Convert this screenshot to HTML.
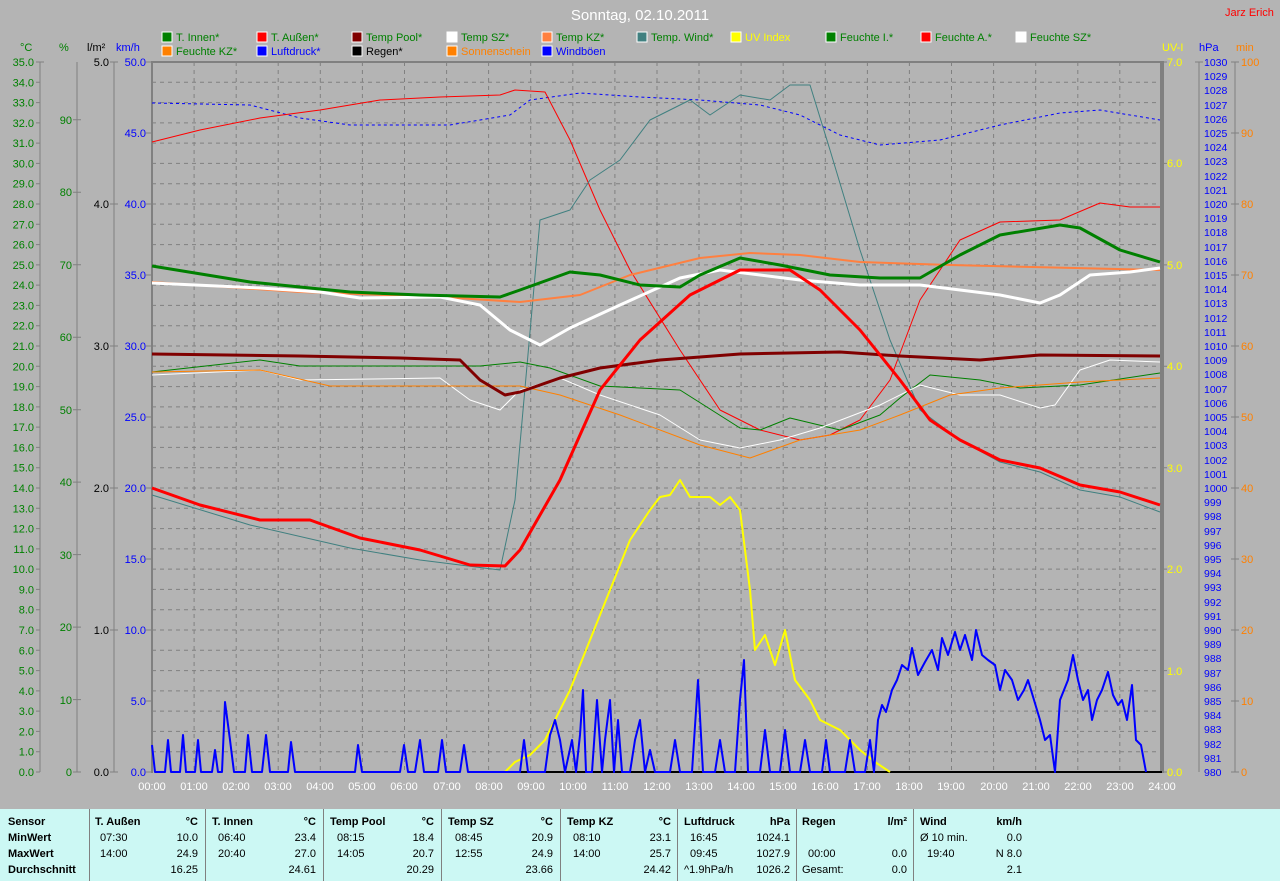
<!DOCTYPE html>
<html><head><meta charset="utf-8"><style>
html,body{margin:0;padding:0;background:#b4b4b4;width:1280px;height:881px;overflow:hidden;font-family:"Liberation Sans",sans-serif;}
svg{position:absolute;left:0;top:0;}
#tbl{position:absolute;left:0;top:809px;width:1280px;height:72px;background:#ccf8f4;font-size:11px;color:#000;}
#tbl div{position:absolute;white-space:nowrap;}
.b{font-weight:bold}
.sep{width:1px;height:72px;top:0;background:#808080}
.r{text-align:right}
</style></head><body>
<svg width="1280" height="809" font-family="Liberation Sans, sans-serif" font-size="11">
<text x="640" y="20" fill="#fff" font-size="15" text-anchor="middle">Sonntag, 02.10.2011</text>
<text x="1225" y="16" fill="#f00" font-size="11">Jarz Erich</text>
<!-- legend -->
<g font-size="11">
<rect x="162" y="32" width="10" height="10" fill="#008000" stroke="#fff"/><text x="176" y="41" fill="#008000">T. Innen*</text>
<rect x="257" y="32" width="10" height="10" fill="#f00" stroke="#fff"/><text x="271" y="41" fill="#008000">T. Außen*</text>
<rect x="352" y="32" width="10" height="10" fill="#800000" stroke="#fff"/><text x="366" y="41" fill="#008000">Temp Pool*</text>
<rect x="447" y="32" width="10" height="10" fill="#fff" stroke="#fff"/><text x="461" y="41" fill="#008000">Temp SZ*</text>
<rect x="542" y="32" width="10" height="10" fill="#ff8040" stroke="#fff"/><text x="556" y="41" fill="#008000">Temp KZ*</text>
<rect x="637" y="32" width="10" height="10" fill="#408080" stroke="#fff"/><text x="651" y="41" fill="#008000">Temp. Wind*</text>
<rect x="731" y="32" width="10" height="10" fill="#ffff00" stroke="#fff"/><text x="745" y="41" fill="#ffff00">UV Index</text>
<rect x="826" y="32" width="10" height="10" fill="#008000" stroke="#fff"/><text x="840" y="41" fill="#008000">Feuchte I.*</text>
<rect x="921" y="32" width="10" height="10" fill="#f00" stroke="#fff"/><text x="935" y="41" fill="#008000">Feuchte A.*</text>
<rect x="1016" y="32" width="10" height="10" fill="#fff" stroke="#fff"/><text x="1030" y="41" fill="#008000">Feuchte SZ*</text>
<rect x="162" y="46" width="10" height="10" fill="#ff8000" stroke="#fff"/><text x="176" y="55" fill="#008000">Feuchte KZ*</text>
<rect x="257" y="46" width="10" height="10" fill="#0000ff" stroke="#fff"/><text x="271" y="55" fill="#0000ff">Luftdruck*</text>
<rect x="352" y="46" width="10" height="10" fill="#000" stroke="#fff"/><text x="366" y="55" fill="#000">Regen*</text>
<rect x="447" y="46" width="10" height="10" fill="#ff8000" stroke="#fff"/><text x="461" y="55" fill="#ff8000">Sonnenschein</text>
<rect x="542" y="46" width="10" height="10" fill="#0000ff" stroke="#fff"/><text x="556" y="55" fill="#0000ff">Windböen</text>
</g>
<!-- axis titles -->
<text x="20" y="51" fill="#008000">°C</text>
<text x="59" y="51" fill="#008000">%</text>
<text x="87" y="51" fill="#000">l/m²</text>
<text x="116" y="51" fill="#0000ff">km/h</text>
<text x="1162" y="51" fill="#ffff00">UV-I</text>
<text x="1199" y="51" fill="#0000ff">hPa</text>
<text x="1236" y="51" fill="#ff8000">min</text>
<!-- grid -->
<g stroke="#808080" stroke-dasharray="4,4" stroke-width="1">
<path d="M152 82.3H1162M152 102.6H1162M152 122.9H1162M152 143.1H1162M152 163.4H1162M152 183.7H1162M152 204H1162M152 224.3H1162M152 244.6H1162M152 264.9H1162M152 285.1H1162M152 305.4H1162M152 325.7H1162M152 346H1162M152 366.3H1162M152 386.6H1162M152 406.9H1162M152 427.1H1162M152 447.4H1162M152 467.7H1162M152 488H1162M152 508.3H1162M152 528.6H1162M152 548.9H1162M152 569.1H1162M152 589.4H1162M152 609.7H1162M152 630H1162M152 650.3H1162M152 670.6H1162M152 690.9H1162M152 711.1H1162M152 731.4H1162M152 751.7H1162"/>
<path d="M194.1 62V772M236.2 62V772M278.2 62V772M320.3 62V772M362.4 62V772M404.5 62V772M446.6 62V772M488.6 62V772M530.7 62V772M572.8 62V772M614.9 62V772M657 62V772M699 62V772M741.1 62V772M783.2 62V772M825.3 62V772M867.4 62V772M909.4 62V772M951.5 62V772M993.6 62V772M1035.7 62V772M1077.8 62V772M1119.8 62V772"/>
</g>
<g stroke="#808080" fill="none">
<path d="M151 62H1162M152 61V773M1161 61V773M1163 61V773" stroke-width="2"/>
<path d="M40 62V772M77 62V772M114 62V772M1199 62V772M1235 62V772"/>
<path d="M36 62h8M36 82.3h4M36 102.6h4M36 122.9h4M36 143.1h4M36 163.4h4M36 183.7h4M36 204h4M36 224.3h4M36 244.6h4M36 264.9h4M36 285.1h4M36 305.4h4M36 325.7h4M36 346h4M36 366.3h4M36 386.6h4M36 406.9h4M36 427.1h4M36 447.4h4M36 467.7h4M36 488h4M36 508.3h4M36 528.6h4M36 548.9h4M36 569.1h4M36 589.4h4M36 609.7h4M36 630h4M36 650.3h4M36 670.6h4M36 690.9h4M36 711.1h4M36 731.4h4M36 751.7h4M36 772h4"/>
<path d="M73 119.8h8M73 192.2h8M73 264.7h8M73 337.2h8M73 409.7h8M73 482.1h8M73 554.6h8M73 627.1h8M73 699.6h8M73 772h8"/>
<path d="M110 62h8M110 204h8M110 346h8M110 488h8M110 630h8M110 772h8"/>
<path d="M146 62h6M146 133h6M146 204h6M146 275h6M146 346h6M146 417h6M146 488h6M146 559h6M146 630h6M146 701h6M146 772h6"/>
<path d="M1163 62h4M1163 163.4h4M1163 264.9h4M1163 366.3h4M1163 467.7h4M1163 569.1h4M1163 670.6h4M1163 772h4"/>
<path d="M1195 62h8M1231 62h8M1231 133h8M1231 204h8M1231 275h8M1231 346h8M1231 417h8M1231 488h8M1231 559h8M1231 630h8M1231 701h8M1231 772h8"/>
</g>
<!-- °C labels -->
<g fill="#008000" text-anchor="end">
<text x="34" y="66">35.0</text><text x="34" y="86.3">34.0</text><text x="34" y="106.6">33.0</text><text x="34" y="126.9">32.0</text><text x="34" y="147.1">31.0</text><text x="34" y="167.4">30.0</text><text x="34" y="187.7">29.0</text><text x="34" y="208">28.0</text><text x="34" y="228.3">27.0</text><text x="34" y="248.6">26.0</text><text x="34" y="268.9">25.0</text><text x="34" y="289.1">24.0</text><text x="34" y="309.4">23.0</text><text x="34" y="329.7">22.0</text><text x="34" y="350">21.0</text><text x="34" y="370.3">20.0</text><text x="34" y="390.6">19.0</text><text x="34" y="410.9">18.0</text><text x="34" y="431.1">17.0</text><text x="34" y="451.4">16.0</text><text x="34" y="471.7">15.0</text><text x="34" y="492">14.0</text><text x="34" y="512.3">13.0</text><text x="34" y="532.6">12.0</text><text x="34" y="552.9">11.0</text><text x="34" y="573.1">10.0</text><text x="34" y="593.4">9.0</text><text x="34" y="613.7">8.0</text><text x="34" y="634">7.0</text><text x="34" y="654.3">6.0</text><text x="34" y="674.6">5.0</text><text x="34" y="694.9">4.0</text><text x="34" y="715.1">3.0</text><text x="34" y="735.4">2.0</text><text x="34" y="755.7">1.0</text><text x="34" y="776">0.0</text>
<text x="72" y="124">90</text><text x="72" y="196">80</text><text x="72" y="269">70</text><text x="72" y="341">60</text><text x="72" y="414">50</text><text x="72" y="486">40</text><text x="72" y="559">30</text><text x="72" y="631">20</text><text x="72" y="704">10</text><text x="72" y="776">0</text>
</g>
<g fill="#000" text-anchor="end">
<text x="109" y="66">5.0</text><text x="109" y="208">4.0</text><text x="109" y="350">3.0</text><text x="109" y="492">2.0</text><text x="109" y="634">1.0</text><text x="109" y="776">0.0</text>
</g>
<g fill="#0000ff" text-anchor="end">
<text x="146" y="66">50.0</text><text x="146" y="137">45.0</text><text x="146" y="208">40.0</text><text x="146" y="279">35.0</text><text x="146" y="350">30.0</text><text x="146" y="421">25.0</text><text x="146" y="492">20.0</text><text x="146" y="563">15.0</text><text x="146" y="634">10.0</text><text x="146" y="705">5.0</text><text x="146" y="776">0.0</text>
</g>
<g fill="#ffff00">
<text x="1167" y="66">7.0</text><text x="1167" y="167">6.0</text><text x="1167" y="269">5.0</text><text x="1167" y="370">4.0</text><text x="1167" y="472">3.0</text><text x="1167" y="573">2.0</text><text x="1167" y="675">1.0</text><text x="1167" y="776">0.0</text>
</g>
<g fill="#ff8000">
<text x="1241" y="66">100</text><text x="1241" y="137">90</text><text x="1241" y="208">80</text><text x="1241" y="279">70</text><text x="1241" y="350">60</text><text x="1241" y="421">50</text><text x="1241" y="492">40</text><text x="1241" y="563">30</text><text x="1241" y="634">20</text><text x="1241" y="705">10</text><text x="1241" y="776">0</text>
</g>
<g fill="#0000ff" font-size="10.5">
<text x="1204" y="66">1030</text><text x="1204" y="80">1029</text><text x="1204" y="94">1028</text><text x="1204" y="109">1027</text><text x="1204" y="123">1026</text><text x="1204" y="137">1025</text><text x="1204" y="151">1024</text><text x="1204" y="165">1023</text><text x="1204" y="180">1022</text><text x="1204" y="194">1021</text><text x="1204" y="208">1020</text><text x="1204" y="222">1019</text><text x="1204" y="236">1018</text><text x="1204" y="251">1017</text><text x="1204" y="265">1016</text><text x="1204" y="279">1015</text><text x="1204" y="293">1014</text><text x="1204" y="307">1013</text><text x="1204" y="322">1012</text><text x="1204" y="336">1011</text><text x="1204" y="350">1010</text><text x="1204" y="364">1009</text><text x="1204" y="378">1008</text><text x="1204" y="393">1007</text><text x="1204" y="407">1006</text><text x="1204" y="421">1005</text><text x="1204" y="435">1004</text><text x="1204" y="449">1003</text><text x="1204" y="464">1002</text><text x="1204" y="478">1001</text><text x="1204" y="492">1000</text><text x="1204" y="506">999</text><text x="1204" y="520">998</text><text x="1204" y="535">997</text><text x="1204" y="549">996</text><text x="1204" y="563">995</text><text x="1204" y="577">994</text><text x="1204" y="591">993</text><text x="1204" y="606">992</text><text x="1204" y="620">991</text><text x="1204" y="634">990</text><text x="1204" y="648">989</text><text x="1204" y="662">988</text><text x="1204" y="677">987</text><text x="1204" y="691">986</text><text x="1204" y="705">985</text><text x="1204" y="719">984</text><text x="1204" y="733">983</text><text x="1204" y="748">982</text><text x="1204" y="762">981</text><text x="1204" y="776">980</text>
</g>
<g fill="#fff" text-anchor="middle">
<text x="152" y="790">00:00</text><text x="194" y="790">01:00</text><text x="236" y="790">02:00</text><text x="278" y="790">03:00</text><text x="320" y="790">04:00</text><text x="362" y="790">05:00</text><text x="404" y="790">06:00</text><text x="447" y="790">07:00</text><text x="489" y="790">08:00</text><text x="531" y="790">09:00</text><text x="573" y="790">10:00</text><text x="615" y="790">11:00</text><text x="657" y="790">12:00</text><text x="699" y="790">13:00</text><text x="741" y="790">14:00</text><text x="783" y="790">15:00</text><text x="825" y="790">16:00</text><text x="867" y="790">17:00</text><text x="909" y="790">18:00</text><text x="951" y="790">19:00</text><text x="994" y="790">20:00</text><text x="1036" y="790">21:00</text><text x="1078" y="790">22:00</text><text x="1120" y="790">23:00</text><text x="1162" y="790">24:00</text>
</g>
<!-- data -->
<g fill="none" stroke-linejoin="round">
<polyline stroke="#0000ff" stroke-dasharray="3,3" points="152,103 250,105 300,118 350,125 450,125 510,115 530,100 580,93 640,97 700,100 760,105 800,115 840,135 880,145 940,140 1000,125 1060,113 1100,110 1160,120"/>
<polyline stroke="#f00" points="152,142 200,130 260,118 320,110 380,100 440,97 500,95 515,90 545,92 570,140 600,210 630,270 680,350 720,410 760,430 800,440 830,435 860,420 890,380 920,300 960,240 1000,222 1060,220 1100,203 1130,207 1160,207"/>
<polyline stroke="#408080" points="152,495 250,525 350,548 420,560 500,570 515,500 540,220 570,210 590,180 620,160 650,120 690,100 710,115 740,95 770,100 790,85 810,85 830,150 860,250 890,340 920,410 960,440 1000,462 1040,472 1080,490 1120,497 1160,512"/>
<polyline stroke="#008000" points="152,372 260,360 300,366 480,366 520,362 550,368 600,386 680,390 740,428 760,430 790,418 840,430 880,415 900,398 930,375 980,380 1020,388 1080,385 1160,373"/>
<polyline stroke="#fff" points="152,375 260,370 300,380 440,378 470,400 500,410 520,390 560,378 600,395 660,415 700,440 740,448 780,440 820,428 880,405 920,385 960,395 1000,395 1040,408 1055,405 1080,370 1110,360 1160,362"/>
<polyline stroke="#ff8000" points="152,372 260,370 330,386 520,386 560,395 620,415 700,445 750,458 800,440 860,430 900,415 950,395 1000,388 1080,382 1160,378"/>
<polyline stroke="#ff8040" stroke-width="2" points="152,282 300,292 440,297 520,302 580,295 630,275 700,258 750,253 800,255 860,262 950,265 1160,270"/>
<polyline stroke="#fff" stroke-width="3" points="152,283 260,288 320,292 360,298 440,297 480,305 510,330 540,345 570,328 620,305 680,278 720,270 760,275 800,280 860,285 920,285 960,290 1000,295 1040,303 1060,295 1090,275 1130,272 1160,268"/>
<polyline stroke="#008000" stroke-width="3" points="152,266 250,282 350,292 420,295 500,297 520,290 570,272 600,275 640,285 680,287 700,275 740,258 780,265 830,275 880,278 920,278 960,255 1000,235 1060,225 1080,228 1120,250 1160,262"/>
<polyline stroke="#800000" stroke-width="3" points="152,354 300,356 400,358 460,360 480,380 505,395 520,392 560,378 600,368 660,360 740,354 840,352 900,356 980,360 1040,355 1160,356"/>
<polyline stroke="#f00" stroke-width="3" points="152,488 200,505 260,520 310,520 360,538 420,550 470,565 505,566 520,550 560,480 600,390 640,340 690,295 740,270 790,270 820,290 860,330 900,380 930,420 960,440 1000,460 1040,468 1080,485 1120,492 1160,505"/>
<line x1="505" y1="772" x2="1162" y2="772" stroke="#000" stroke-width="2"/>
<polyline stroke="#ffff00" stroke-width="2" points="505,772 515,762 530,755 545,740 555,720 570,690 590,640 610,590 630,540 650,510 660,497 670,495 680,480 690,497 710,497 720,505 730,497 740,510 750,590 755,650 765,635 775,665 785,630 795,680 810,700 820,720 840,730 860,750 875,762 890,772"/>
<polyline stroke="#0000ff" stroke-width="2" points="152,745 155,772 165,772 168,740 171,772 180,772 183,735 186,772 195,772 198,740 201,772 212,772 215,750 218,772 222,772 225,702 230,740 234,772 245,772 248,735 252,772 262,772 266,735 270,772 288,772 291,742 295,772 355,772 358,745 362,772 400,772 404,745 408,772 415,772 420,740 424,772 438,772 442,740 446,772 460,772 464,745 468,772 520,772 524,740 528,772 545,772 550,735 555,720 560,740 565,772 572,740 576,772 580,735 583,690 586,772 592,772 597,700 602,772 605,740 610,700 614,772 618,720 622,772 630,772 635,740 640,720 645,772 650,750 655,772 670,772 675,740 680,772 692,772 698,680 703,772 715,772 720,740 725,772 735,772 740,700 744,660 748,772 760,772 765,730 770,772 780,772 785,730 790,772 800,772 805,740 810,772 822,772 826,740 830,772 845,772 850,740 855,772 865,772 870,740 874,772 878,720 882,705 886,712 892,690 897,680 902,665 908,670 912,648 918,675 925,662 932,650 938,670 942,638 948,655 955,632 960,650 965,635 972,660 976,630 982,655 988,660 995,665 1000,690 1005,670 1012,680 1018,700 1024,690 1028,680 1034,700 1040,720 1045,740 1050,735 1055,772 1060,700 1064,690 1068,680 1073,655 1078,680 1083,700 1088,690 1092,720 1097,700 1102,690 1108,672 1113,695 1118,705 1122,700 1127,720 1132,685 1136,740 1141,745 1146,772"/>
</g>
</svg>
<div id="tbl">
<div class="sep" style="left:89px"></div><div class="sep" style="left:205px"></div><div class="sep" style="left:323px"></div><div class="sep" style="left:441px"></div><div class="sep" style="left:560px"></div><div class="sep" style="left:677px"></div><div class="sep" style="left:796px"></div><div class="sep" style="left:913px"></div>
<div class="b" style="left:8px;top:7px">Sensor</div><div class="b" style="left:8px;top:23px">MinWert</div><div class="b" style="left:8px;top:39px">MaxWert</div><div class="b" style="left:8px;top:55px">Durchschnitt</div>

<div class="b" style="left:95px;top:7px">T. Außen</div><div class="b r" style="right:1082px;top:7px">°C</div>
<div style="left:100px;top:23px">07:30</div><div class="r" style="right:1082px;top:23px">10.0</div>
<div style="left:100px;top:39px">14:00</div><div class="r" style="right:1082px;top:39px">24.9</div>
<div class="r" style="right:1082px;top:55px">16.25</div>

<div class="b" style="left:212px;top:7px">T. Innen</div><div class="b r" style="right:964px;top:7px">°C</div>
<div style="left:218px;top:23px">06:40</div><div class="r" style="right:964px;top:23px">23.4</div>
<div style="left:218px;top:39px">20:40</div><div class="r" style="right:964px;top:39px">27.0</div>
<div class="r" style="right:964px;top:55px">24.61</div>

<div class="b" style="left:330px;top:7px">Temp Pool</div><div class="b r" style="right:846px;top:7px">°C</div>
<div style="left:337px;top:23px">08:15</div><div class="r" style="right:846px;top:23px">18.4</div>
<div style="left:337px;top:39px">14:05</div><div class="r" style="right:846px;top:39px">20.7</div>
<div class="r" style="right:846px;top:55px">20.29</div>

<div class="b" style="left:448px;top:7px">Temp SZ</div><div class="b r" style="right:727px;top:7px">°C</div>
<div style="left:455px;top:23px">08:45</div><div class="r" style="right:727px;top:23px">20.9</div>
<div style="left:455px;top:39px">12:55</div><div class="r" style="right:727px;top:39px">24.9</div>
<div class="r" style="right:727px;top:55px">23.66</div>

<div class="b" style="left:567px;top:7px">Temp KZ</div><div class="b r" style="right:609px;top:7px">°C</div>
<div style="left:573px;top:23px">08:10</div><div class="r" style="right:609px;top:23px">23.1</div>
<div style="left:573px;top:39px">14:00</div><div class="r" style="right:609px;top:39px">25.7</div>
<div class="r" style="right:609px;top:55px">24.42</div>

<div class="b" style="left:684px;top:7px">Luftdruck</div><div class="b r" style="right:490px;top:7px">hPa</div>
<div style="left:690px;top:23px">16:45</div><div class="r" style="right:490px;top:23px">1024.1</div>
<div style="left:690px;top:39px">09:45</div><div class="r" style="right:490px;top:39px">1027.9</div>
<div style="left:684px;top:55px">^1.9hPa/h</div><div class="r" style="right:490px;top:55px">1026.2</div>

<div class="b" style="left:802px;top:7px">Regen</div><div class="b r" style="right:373px;top:7px">l/m²</div>
<div style="left:808px;top:39px">00:00</div><div class="r" style="right:373px;top:39px">0.0</div>
<div style="left:802px;top:55px">Gesamt:</div><div class="r" style="right:373px;top:55px">0.0</div>

<div class="b" style="left:920px;top:7px">Wind</div><div class="b r" style="right:258px;top:7px">km/h</div>
<div style="left:920px;top:23px">Ø 10 min.</div><div class="r" style="right:258px;top:23px">0.0</div>
<div style="left:927px;top:39px">19:40</div><div class="r" style="right:258px;top:39px">N 8.0</div>
<div class="r" style="right:258px;top:55px">2.1</div>
</div>
</body></html>
